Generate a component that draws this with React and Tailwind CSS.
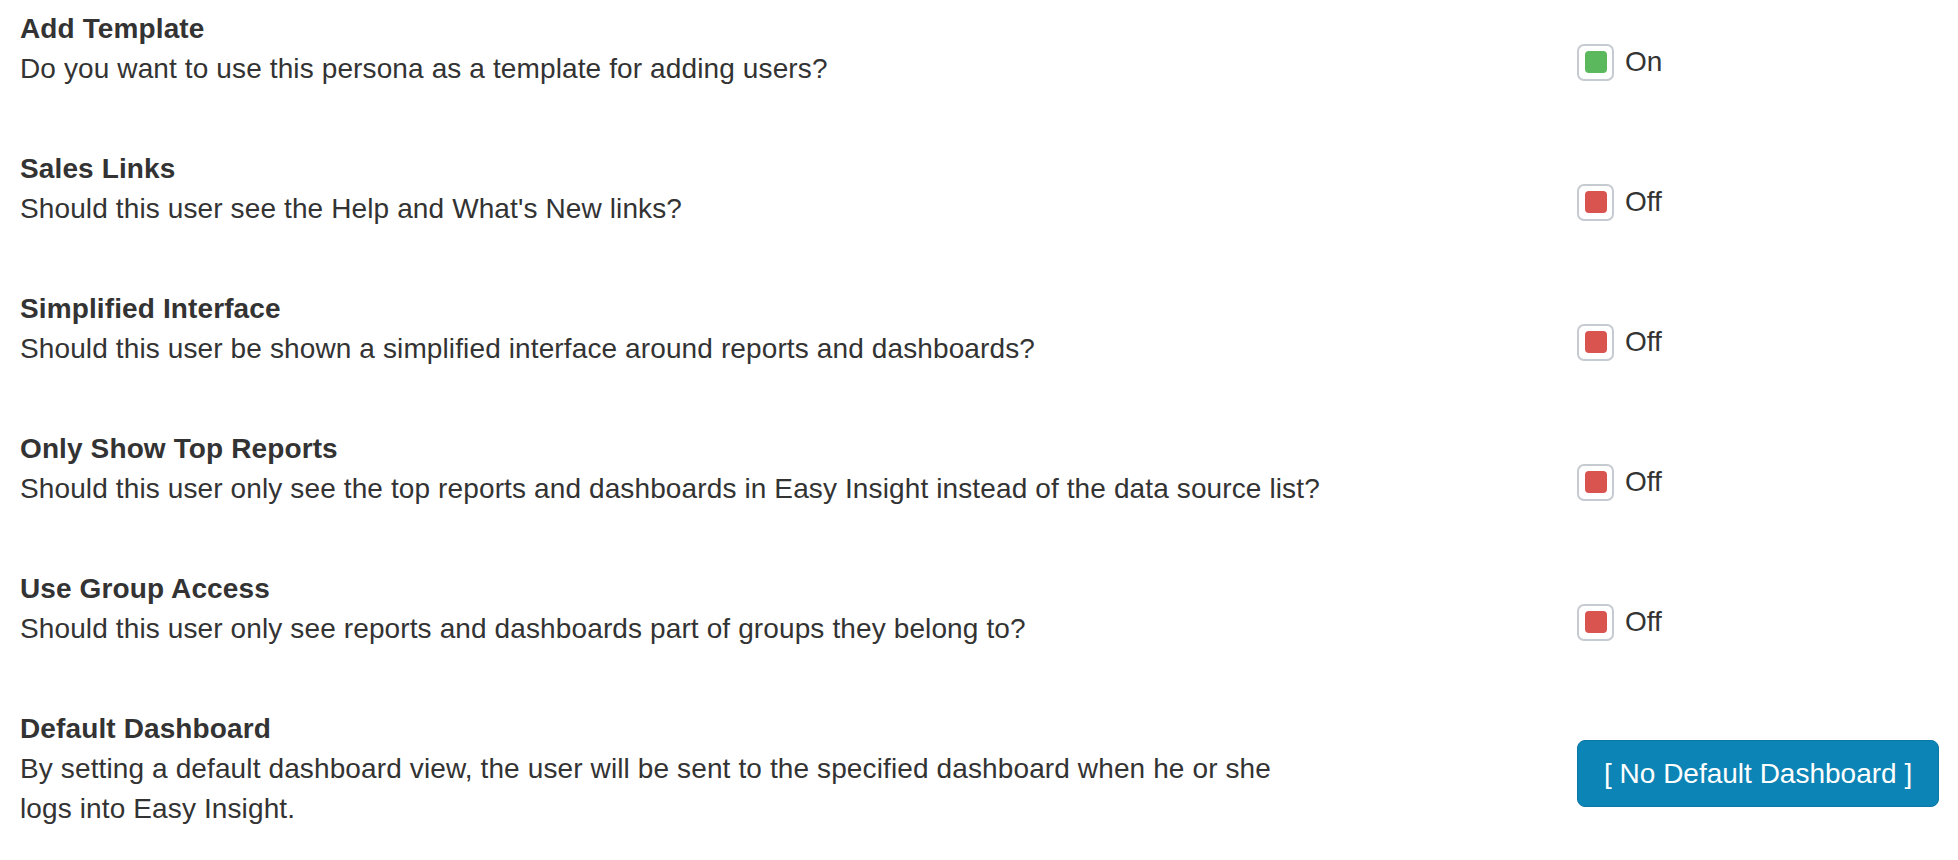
import { useState } from 'react';

const settings = [
  { key: 'template', title: 'Add Template', text: 'Do you want to use this persona as a template for adding users?', on: true },
  { key: 'sales', title: 'Sales Links', text: "Should this user see the Help and What's New links?", on: false },
  { key: 'simple', title: 'Simplified Interface', text: 'Should this user be shown a simplified interface around reports and dashboards?', on: false },
  { key: 'top', title: 'Only Show Top Reports', text: 'Should this user only see the top reports and dashboards in Easy Insight instead of the data source list?', on: false },
  { key: 'group', title: 'Use Group Access', text: 'Should this user only see reports and dashboards part of groups they belong to?', on: false },
];

const Toggle = ({ on, onClick }) => (
  <button onClick={onClick} className="flex items-center gap-[11px] mt-[33px] cursor-pointer">
    <span className="w-[37px] h-[37px] rounded-[7px] border-2 border-[#c6cbd1] bg-white flex items-center justify-center">
      <span className={`w-[22px] h-[22px] rounded-[4px] ${on ? 'bg-[#5cb85c]' : 'bg-[#d9534f]'}`}></span>
    </span>
    <span className="text-[28px] leading-[40px] text-[#333]">{on ? 'On' : 'Off'}</span>
  </button>
);

const Row = ({ title, children, control }) => (
  <div className="flex mb-[60px]">
    <div className="w-[1300px] shrink-0 tracking-[0.12px]">
      <div className="font-bold text-[28px] leading-[40px] text-[#333]">{title}</div>
      <p className="text-[28px] leading-[40px] text-[#333]">{children}</p>
    </div>
    <div className="ml-[257px]">{control}</div>
  </div>
);

export default function App() {
  const [values, setValues] = useState(
    Object.fromEntries(settings.map(s => [s.key, s.on]))
  );

  const flip = (key) => setValues(v => ({ ...v, [key]: !v[key] }));

  return (
    <div className="bg-white min-h-screen pt-[9px] px-[20px]" style={{ fontFamily: '"Liberation Sans", Arial, sans-serif' }}>
      {settings.map(s => (
        <Row key={s.key} title={s.title} control={<Toggle on={values[s.key]} onClick={() => flip(s.key)} />}>
          {s.text}
        </Row>
      ))}

      <Row
        title="Default Dashboard"
        control={
          <button className="mt-[31px] h-[67px] px-[26px] rounded-[8px] bg-[#0c84b5] border border-[#0a78a6] text-white text-[28px] leading-[40px] whitespace-nowrap">
            [ No Default Dashboard ]
          </button>
        }
      >
        By setting a default dashboard view, the user will be sent to the specified dashboard when he or she logs into Easy Insight.
      </Row>
    </div>
  );
}
